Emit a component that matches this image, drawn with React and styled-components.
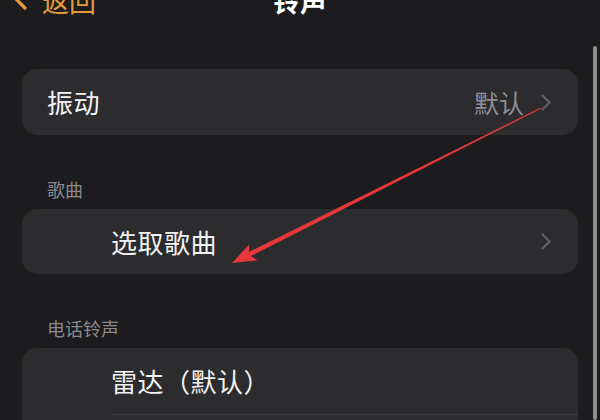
import React from "react";
import styled, { createGlobalStyle } from "styled-components";

const Global = createGlobalStyle`
  html, body { margin: 0; padding: 0; background: #1c1c1e; }
  body { font-family: "Noto Sans CJK SC", "Noto Sans", sans-serif; }
`;

const Page = styled.div`
  position: relative;
  width: 600px;
  height: 420px;
  overflow: hidden;
  background: #1c1c1e;
`;

const NavBar = styled.div`
  display: grid;
  grid-template-columns: 1fr auto 1fr;
  align-items: end;
  height: 33px;
  margin-top: -19px;
  padding: 0 10px;
`;

const Back = styled.div`
  display: flex;
  align-items: flex-end;
  gap: 14px;
  color: #e29a3c;
  font-size: 27px;
  line-height: 27px;
`;

const Title = styled.div`
  color: #ffffff;
  font-size: 27px;
  font-weight: 700;
  line-height: 27px;
`;

const Content = styled.div`
  padding: 55px 22px 0;
`;

const Card = styled.div`
  background: #2c2c2e;
  border-radius: 15px;
  overflow: hidden;
`;

const Row = styled.div`
  display: flex;
  align-items: center;
  height: ${(p) => p.$h || 66}px;
  padding-left: ${(p) => p.$indent}px;
  padding-right: 27px;
  box-sizing: border-box;
  border-bottom: ${(p) => (p.$sep ? "1px solid #3d3d40" : "none")};
`;

const RowWrap = styled.div`
  padding-left: ${(p) => p.$indent}px;
  padding-bottom: 20px;
`;

const RowLabel = styled.div`
  flex: 1;
  color: #f2f2f4;
  font-size: 26px;
  line-height: 30px;
  letter-spacing: 0.5px;
`;

const Value = styled.div`
  color: #8e8e93;
  font-size: 25px;
  line-height: 30px;
  margin-right: 17px;
`;

const SectionLabel = styled.div`
  padding: 44px 0 10px 25px;
  color: #8a8a8e;
  font-size: 18px;
  line-height: 20px;
`;

const Scrollbar = styled.div`
  position: absolute;
  right: 3px;
  top: 46px;
  bottom: 0;
  width: 4px;
  border-radius: 2px;
  background: #8e8e8e;
`;

const Overlay = styled.svg`
  position: absolute;
  left: 0;
  top: 0;
  pointer-events: none;
`;

const Chevron = () => (
  <svg width="10" height="17" viewBox="0 0 10 17">
    <polyline
      points="1.5,1.5 8.5,8.5 1.5,15.5"
      fill="none"
      stroke="#5e5e62"
      strokeWidth="2.4"
      strokeLinecap="round"
      strokeLinejoin="round"
    />
  </svg>
);

const BackChevron = () => (
  <svg width="18" height="30" viewBox="0 0 18 30" style={{ marginBottom: 2 }}>
    <polyline
      points="15,2 3,14 15,26"
      fill="none"
      stroke="#e29a3c"
      strokeWidth="3.2"
      strokeLinecap="round"
      strokeLinejoin="round"
    />
  </svg>
);

function arrowPoints() {
  const tip = [232, 263];
  const start = [541, 108];
  const dx = start[0] - tip[0];
  const dy = start[1] - tip[1];
  const len = Math.hypot(dx, dy);
  const d = [dx / len, dy / len];
  const n = [-d[1], d[0]];
  const headLen = 24;
  const headHalf = 9;
  const base = [tip[0] + d[0] * headLen, tip[1] + d[1] * headLen];
  const neck = [tip[0] + d[0] * (headLen - 4), tip[1] + d[1] * (headLen - 4)];
  const p = (c, k, w) => [c[0] + n[0] * w * k, c[1] + n[1] * w * k];
  const pts = [
    tip,
    p(base, 1, headHalf),
    p(neck, 1, 2.2),
    p(start, 1, 0.5),
    p(start, -1, 0.5),
    p(neck, -1, 2.2),
    p(base, -1, headHalf),
  ];
  return pts.map((q) => q.map((v) => v.toFixed(1)).join(",")).join(" ");
}

export default function App() {
  return (
    <>
      <Global />
      <Page>
        <NavBar>
          <Back>
            <BackChevron />
            <span>返回</span>
          </Back>
          <Title>铃声</Title>
          <div />
        </NavBar>
        <Content>
          <Card>
            <Row $indent={25} $h={66}>
              <RowLabel>振动</RowLabel>
              <Value>默认</Value>
              <Chevron />
            </Row>
          </Card>
          <SectionLabel>歌曲</SectionLabel>
          <Card>
            <Row $indent={89} $h={65}>
              <RowLabel>选取歌曲</RowLabel>
              <Chevron />
            </Row>
          </Card>
          <SectionLabel>电话铃声</SectionLabel>
          <Card>
            <RowWrap $indent={89}>
              <Row $indent={0} $h={67} $sep>
                <RowLabel>雷达（默认）</RowLabel>
              </Row>
            </RowWrap>
          </Card>
        </Content>
        <Scrollbar />
        <Overlay width="600" height="420" viewBox="0 0 600 420">
          <polygon points={arrowPoints()} fill="#e8383c" />
        </Overlay>
      </Page>
    </>
  );
}
